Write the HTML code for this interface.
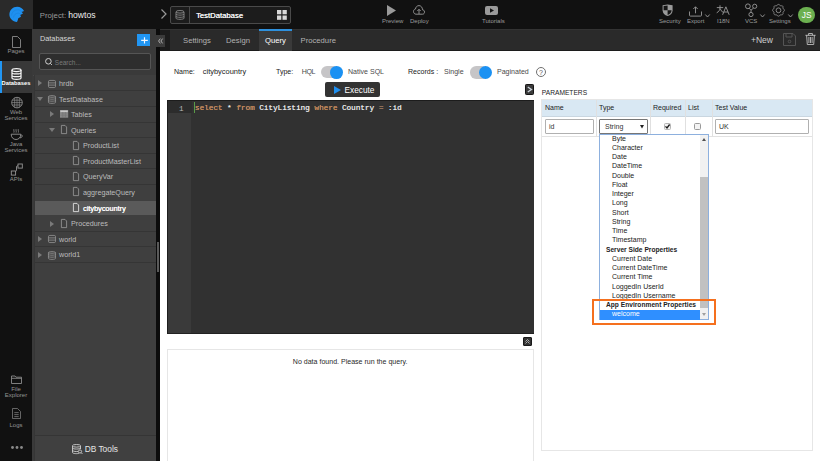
<!DOCTYPE html>
<html><head><meta charset="utf-8">
<style>
*{margin:0;padding:0;box-sizing:border-box}
html,body{width:820px;height:461px;overflow:hidden;background:#111;font-family:"Liberation Sans",sans-serif}
.a{position:absolute;white-space:nowrap}
svg{position:absolute;overflow:visible}
/* top bar */
#top{left:0;top:0;width:820px;height:29px;background:#111}
#logo{left:0;top:0;width:33px;height:29px;background:#2a2a2a}
.tl{font-size:6px;color:#9c9c9c;line-height:6px}
/* left nav */
#nav{left:0;top:29px;width:32px;height:432px;background:#111}
.nl{font-size:6px;color:#959595;line-height:6px;text-align:center;width:32px;left:0;margin-top:1px}
/* sidebar */
#side{left:32px;top:29px;width:124px;height:432px;background:#3a3a3a}
#tree{left:35px;top:75px;width:121px;height:360px;background:#3f3f3f}
.row{position:absolute;left:35px;width:121px;height:16px;border-top:1px solid #333}
.tt{font-size:7.2px;color:#bdbdbd;line-height:8px}
/* tabs */
#tabs{left:170px;top:29px;width:650px;height:22px;background:#2a2a2a}
.tab{font-size:7.7px;color:#b2b2b2;line-height:8px}
</style></head><body>
<div class="a" id="top"></div>
<div class="a" id="logo"></div>
<!-- logo -->
<svg style="left:0;top:0" width="33" height="29" viewBox="0 0 33 29"><path d="M17 22 C12.6 21.6 9.4 18.3 9.4 14.4 C9.4 10.1 12.9 6.7 17.2 6.7 C20.2 6.7 22.8 8.5 24 11.1 L21.7 12.1 L23 13.6 L20.3 15.1 L21 16.8 L18.3 18.3 L17.8 20 Z" fill="#1e90f0"/><g fill="none" stroke="#1a78cc" stroke-width="0.5" opacity="0.7"><path d="M11.5 15.5 C11.8 12 14 10 17.5 9.8 C19.5 9.8 21 10.7 22 12"/><path d="M13.5 17.5 C13.8 15 15.5 13.2 18 13.2 C19 13.2 19.8 13.5 20.5 14.5"/></g></svg>
<div class="a" style="left:39.8px;top:10.5px;font-size:7.75px;line-height:9px;color:#9a9a9a">Project: <span style="color:#ececec;font-size:8.65px">howtos</span></div>

<!-- chevron + db selector -->
<svg style="left:160px;top:9px" width="8" height="10" viewBox="0 0 8 10"><path d="M1.5 0.5 L6 5 L1.5 9.5" fill="none" stroke="#9a9a9a" stroke-width="1.2"/></svg>
<div class="a" style="left:170px;top:6px;width:121px;height:18px;background:#1c1c1c;border:1px solid #4a4a4a;border-radius:2px"></div>
<div class="a" style="left:189px;top:7px;width:1px;height:16px;background:#4a4a4a"></div>
<svg style="left:175px;top:10px" width="10" height="10" viewBox="0 0 10 10"><g fill="none" stroke="#8a8a8a" stroke-width="0.9"><ellipse cx="5" cy="1.8" rx="4" ry="1.3"/><path d="M1 1.8 V8.2 C1 9.7 9 9.7 9 8.2 V1.8 M1 4 C1 5.5 9 5.5 9 4 M1 6.2 C1 7.7 9 7.7 9 6.2"/></g></svg>
<div class="a" style="left:196px;top:11.7px;font-size:7.7px;line-height:8px;color:#f4f4f4;text-shadow:0.15px 0 0 #f4f4f4">TestDatabase</div>
<svg style="left:277px;top:10px" width="10" height="10" viewBox="0 0 10 10"><g fill="#d8d8d8"><rect x="0" y="0" width="4.3" height="4.3"/><rect x="5.5" y="0" width="4.3" height="4.3"/><rect x="0" y="5.5" width="4.3" height="4.3"/><rect x="5.5" y="5.5" width="4.3" height="4.3"/></g></svg>

<!-- preview / deploy / tutorials -->
<svg style="left:387px;top:5px" width="9" height="11" viewBox="0 0 9 11"><path d="M0 0 L9 5.5 L0 11Z" fill="#9a9a9a"/></svg>
<div class="a tl" style="left:382px;top:18px">Preview</div>
<svg style="left:413px;top:5px" width="12" height="10" viewBox="0 0 12 10"><g fill="none" stroke="#9a9a9a" stroke-width="0.9"><path d="M3 9.2 H9.5 C11 9.2 11.5 8 11.5 7 C11.5 5.5 10.3 4.8 9.5 4.8 C9.5 2.3 7.8 0.6 6 0.6 C4 0.6 2.6 2.2 2.5 4 C1.3 4.2 0.5 5.2 0.5 6.5 C0.5 8 1.6 9.2 3 9.2Z"/><path d="M6 9 V4.3 M4.3 6 L6 4.3 L7.7 6"/></g></svg>
<div class="a tl" style="left:410px;top:18px">Deploy</div>
<svg style="left:485px;top:6px" width="13" height="9" viewBox="0 0 13 9"><rect x="0" y="0" width="13" height="9" rx="2" fill="#9a9a9a"/><path d="M5 2.3 L9 4.5 L5 6.7Z" fill="#111"/></svg>
<div class="a tl" style="left:482px;top:18px">Tutorials</div>

<!-- right icons -->
<svg style="left:662px;top:4px" width="12" height="13" viewBox="0 0 12 13"><path d="M0.6 1.3 L5.6 0.5 L10.6 1.3 V6.2 C10.6 9.2 8.6 11 5.6 12 C2.6 11 0.6 9.2 0.6 6.2 Z" fill="#9a9a9a"/><path d="M1.6 2.1 L5.6 1.5 V6.2 H1.6 Z M5.6 6.2 H9.6 C9.5 8.6 8 10.1 5.6 11 Z" fill="#151515"/></svg>
<div class="a tl" style="left:659px;top:18px">Security</div>
<svg style="left:689px;top:5.5px" width="14" height="11" viewBox="0 0 14 11"><g fill="none" stroke="#9a9a9a" stroke-width="0.9"><path d="M0.5 5.5 V9.3 C0.5 9.8 0.8 10.1 1.3 10.1 H11.7 C12.2 10.1 12.5 9.8 12.5 9.3 V5.5"/><path d="M6.5 7.3 V0.8 M4.3 3 L6.5 0.8 L8.7 3"/></g></svg>
<svg style="left:705px;top:14.2px" width="5" height="4" viewBox="0 0 5 4"><path d="M0.3 0.5 L2.5 3 L4.7 0.5" fill="none" stroke="#9a9a9a" stroke-width="0.9"/></svg>
<div class="a tl" style="left:687px;top:18px">Export</div>
<svg style="left:716px;top:5px" width="14" height="11" viewBox="0 0 14 11"><g fill="none" stroke="#9a9a9a" stroke-width="0.9"><path d="M0.8 2.6 H7.2 M4 0.3 V2.6 C4 5 2.8 6.8 0.7 7.8 M4.2 3.6 C5 5.5 6 6.8 7.3 7.6"/><path d="M6.6 9.8 L9.9 1.8 L13.2 9.8 M7.8 7 H12"/></g></svg>
<div class="a tl" style="left:717px;top:18px">I18N</div>
<svg style="left:744px;top:3px" width="14" height="14" viewBox="0 0 14 14"><g fill="none" stroke="#9a9a9a" stroke-width="0.9"><circle cx="3.9" cy="3.3" r="2.4"/><circle cx="10.7" cy="3.3" r="2.1"/><circle cx="7" cy="11.5" r="2.1"/><path d="M5.2 5.3 L7 7.2 L9.5 5.1 M7 7.2 V9.4"/></g></svg>
<svg style="left:760px;top:14.2px" width="5" height="4" viewBox="0 0 5 4"><path d="M0.3 0.5 L2.5 3 L4.7 0.5" fill="none" stroke="#9a9a9a" stroke-width="0.9"/></svg>
<div class="a tl" style="left:745px;top:18px">VCS</div>
<svg style="left:772px;top:3.8px" width="13" height="13" viewBox="0 0 13 13"><g fill="none" stroke="#9a9a9a" stroke-width="0.85"><circle cx="6.5" cy="6.3" r="2.4"/><path d="M6.50 0.42 L6.73 0.42 L6.96 0.45 L7.18 0.52 L7.39 0.67 L7.56 0.95 L7.71 1.24 L7.88 1.41 L8.06 1.51 L8.24 1.59 L8.42 1.67 L8.60 1.74 L8.79 1.81 L8.98 1.87 L9.22 1.86 L9.53 1.77 L9.85 1.69 L10.10 1.73 L10.31 1.84 L10.49 1.98 L10.66 2.14 L10.82 2.31 L10.96 2.49 L11.07 2.70 L11.11 2.95 L11.03 3.27 L10.94 3.58 L10.93 3.82 L10.99 4.01 L11.06 4.20 L11.13 4.38 L11.21 4.56 L11.29 4.74 L11.39 4.92 L11.56 5.09 L11.85 5.24 L12.13 5.41 L12.28 5.62 L12.35 5.84 L12.38 6.07 L12.38 6.30 L12.38 6.53 L12.35 6.76 L12.28 6.98 L12.13 7.19 L11.85 7.36 L11.56 7.51 L11.39 7.68 L11.29 7.86 L11.21 8.04 L11.13 8.22 L11.06 8.40 L10.99 8.59 L10.93 8.78 L10.94 9.02 L11.03 9.33 L11.11 9.65 L11.07 9.90 L10.96 10.11 L10.82 10.29 L10.66 10.46 L10.49 10.62 L10.31 10.76 L10.10 10.87 L9.85 10.91 L9.53 10.83 L9.22 10.74 L8.98 10.73 L8.79 10.79 L8.60 10.86 L8.42 10.93 L8.24 11.01 L8.06 11.09 L7.88 11.19 L7.71 11.36 L7.56 11.65 L7.39 11.93 L7.18 12.08 L6.96 12.15 L6.73 12.18 L6.50 12.18 L6.27 12.18 L6.04 12.15 L5.82 12.08 L5.61 11.93 L5.44 11.65 L5.29 11.36 L5.12 11.19 L4.94 11.09 L4.76 11.01 L4.58 10.93 L4.40 10.86 L4.21 10.79 L4.02 10.73 L3.78 10.74 L3.47 10.83 L3.15 10.91 L2.90 10.87 L2.69 10.76 L2.51 10.62 L2.34 10.46 L2.18 10.29 L2.04 10.11 L1.93 9.90 L1.89 9.65 L1.97 9.33 L2.06 9.02 L2.07 8.78 L2.01 8.59 L1.94 8.40 L1.87 8.22 L1.79 8.04 L1.71 7.86 L1.61 7.68 L1.44 7.51 L1.15 7.36 L0.87 7.19 L0.72 6.98 L0.65 6.76 L0.62 6.53 L0.62 6.30 L0.62 6.07 L0.65 5.84 L0.72 5.62 L0.87 5.41 L1.15 5.24 L1.44 5.09 L1.61 4.92 L1.71 4.74 L1.79 4.56 L1.87 4.38 L1.94 4.20 L2.01 4.01 L2.07 3.82 L2.06 3.58 L1.97 3.27 L1.89 2.95 L1.93 2.70 L2.04 2.49 L2.18 2.31 L2.34 2.14 L2.51 1.98 L2.69 1.84 L2.90 1.73 L3.15 1.69 L3.47 1.77 L3.78 1.86 L4.02 1.87 L4.21 1.81 L4.40 1.74 L4.58 1.67 L4.76 1.59 L4.94 1.51 L5.12 1.41 L5.29 1.24 L5.44 0.95 L5.61 0.67 L5.82 0.52 L6.04 0.45 L6.27 0.42Z"/></g></svg>
<svg style="left:787.5px;top:14.2px" width="5" height="4" viewBox="0 0 5 4"><path d="M0.3 0.5 L2.5 3 L4.7 0.5" fill="none" stroke="#9a9a9a" stroke-width="0.9"/></svg>
<div class="a tl" style="left:769px;top:18px">Settings</div>
<div class="a" style="left:798.2px;top:6.5px;width:16.4px;height:16.4px;border-radius:50%;background:#6cb050"></div>
<div class="a" style="left:798.4px;top:10.6px;width:16.4px;text-align:center;font-size:8.3px;line-height:9px;color:#fff">JS</div>

<!-- left nav -->
<div class="a" id="nav"></div>
<div class="a" style="left:0;top:61px;width:32px;height:32px;background:#383838"></div>
<div class="a" style="left:0;top:61px;width:1.5px;height:32px;background:#2196f3"></div>
<svg style="left:12px;top:36px" width="9" height="12" viewBox="0 0 9 12"><path d="M0.5 0.5 H5.5 L8.5 3.5 V11.5 H0.5Z" fill="none" stroke="#8a8a8a" stroke-width="0.9"/></svg>
<div class="a nl" style="top:47.3px">Pages</div>
<svg style="left:11px;top:67.5px" width="11" height="12" viewBox="0 0 11 12"><g fill="none" stroke="#f4f4f4" stroke-width="1.25"><ellipse cx="5.5" cy="2" rx="4.5" ry="1.5"/><path d="M1 2 V10 C1 11.8 10 11.8 10 10 V2 M1 4.7 C1 6.3 10 6.3 10 4.7 M1 7.4 C1 9 10 9 10 7.4"/></g></svg>
<div class="a nl" style="top:78.9px;color:#fff;font-weight:bold;font-size:5.8px">Databases</div>
<svg style="left:10.8px;top:96.8px" width="12" height="12" viewBox="0 0 12 12"><defs><clipPath id="gc"><circle cx="6" cy="5.6" r="5.5"/></clipPath></defs><g fill="none" stroke="#959595"><circle cx="6" cy="5.6" r="5.3" stroke-width="0.8"/><g clip-path="url(#gc)" stroke-width="0.65"><path d="M3.7 0 V12 M6 0 V12 M8.3 0 V12 M0 3.2 H12 M0 5.6 H12 M0 8 H12"/></g></g></svg>
<div class="a nl" style="top:108px">Web</div>
<div class="a nl" style="top:114px">Services</div>
<svg style="left:10px;top:128px" width="13" height="12" viewBox="0 0 13 12"><g fill="none" stroke="#959595" stroke-width="0.9"><path d="M1.2 6.2 H10.8 C10.8 9.6 8.6 11.5 6 11.5 C3.4 11.5 1.2 9.6 1.2 6.2Z"/><path d="M10.8 6.8 C12.8 6.8 12.8 9.6 9.9 9.9"/><path d="M3.9 1.2 C3.4 2.2 4.4 3 3.9 4.6 M6.1 1.2 C5.6 2.2 6.6 3 6.1 4.6 M8.3 1.2 C7.8 2.2 8.8 3 8.3 4.6" stroke-width="0.8"/></g></svg>
<div class="a nl" style="top:140px">Java</div>
<div class="a nl" style="top:146px">Services</div>
<svg style="left:10px;top:163px" width="13" height="13" viewBox="0 0 13 13"><g fill="none" stroke="#959595" stroke-width="0.9"><rect x="8" y="1" width="4.3" height="4.1"/><rect x="1.3" y="8" width="4.3" height="4.1"/><path d="M5.6 8.6 L6.5 7.6 V3.4 L8 2.6"/></g></svg>
<div class="a nl" style="top:175px">APIs</div>
<svg style="left:11px;top:375px" width="11" height="9" viewBox="0 0 11 9"><path d="M0.5 1 H4 L5 2.2 H10.5 V8.5 H0.5Z M0.5 3.3 H10.5" fill="none" stroke="#8a8a8a" stroke-width="0.9"/></svg>
<div class="a nl" style="top:385.4px">File</div>
<div class="a nl" style="top:391.4px">Explorer</div>
<svg style="left:12px;top:408px" width="9" height="11" viewBox="0 0 9 11"><path d="M0.5 0.5 H5.5 L8.5 3.5 V10.5 H0.5Z M2.3 4.6 H6.7 M2.3 6.6 H6.7 M2.3 8.6 H6.7" fill="none" stroke="#8a8a8a" stroke-width="0.7"/></svg>
<div class="a nl" style="top:420.5px">Logs</div>
<svg style="left:11px;top:446px" width="12" height="3" viewBox="0 0 12 3"><g fill="#8a8a8a"><circle cx="1.5" cy="1.5" r="1.4"/><circle cx="6" cy="1.5" r="1.4"/><circle cx="10.5" cy="1.5" r="1.4"/></g></svg>

<!-- sidebar -->
<div class="a" id="side"></div>
<div class="a" style="left:40px;top:35px;font-size:7.3px;line-height:8px;color:#d6d6d6">Databases</div>
<div class="a" style="left:137.4px;top:33.9px;width:12.6px;height:12.1px;background:#2196f3"></div>
<svg style="left:140.5px;top:36.8px" width="7" height="7" viewBox="0 0 7 7"><path d="M3.5 0.3 V6.5 M0.2 3.3 H6.8" stroke="#f4f8ff" stroke-width="1.15"/></svg>
<div class="a" style="left:39px;top:53px;width:112px;height:17px;background:#2e2e2e;border:1px solid #555;border-radius:2px"></div>
<svg style="left:44.8px;top:57.8px" width="8" height="8" viewBox="0 0 8 8"><g fill="none" stroke="#d0d0d0" stroke-width="1"><circle cx="3.4" cy="3.3" r="2.8"/><path d="M5.4 5.4 L6.9 6.9"/></g></svg>
<div class="a" style="left:54.8px;top:58.6px;font-size:6.5px;line-height:8px;color:#7a7a7a">Search...</div>
<div class="a" style="left:33px;top:74.5px;width:123px;height:1px;background:#474747"></div>
<div class="a" id="tree"></div>
<div class="a" style="left:35px;top:436px;width:121px;height:25px;background:#404040"></div>
<div class="a" style="left:35px;top:435px;width:121px;height:1px;background:#353535"></div>
<div class="a" style="left:34px;top:75px;width:1px;height:386px;background:#363636"></div>
<div class="a" style="left:156px;top:29px;width:4px;height:432px;background:#0c0c0c"></div>
<div class="a" style="left:157px;top:242px;width:2px;height:30px;background:#5a5a5a"></div>

<!-- tree rows -->
<div class="a" style="left:35px;top:90px;width:121px;height:1px;background:#353535"></div>
<div class="a" style="left:35px;top:106px;width:121px;height:1px;background:#353535"></div>
<div class="a" style="left:35px;top:122px;width:121px;height:1px;background:#353535"></div>
<div class="a" style="left:35px;top:137px;width:121px;height:1px;background:#353535"></div>
<div class="a" style="left:35px;top:153px;width:121px;height:1px;background:#353535"></div>
<div class="a" style="left:35px;top:168px;width:121px;height:1px;background:#353535"></div>
<div class="a" style="left:35px;top:184px;width:121px;height:1px;background:#353535"></div>
<div class="a" style="left:35px;top:200.6px;width:121px;height:14.7px;background:#5a5a5a"></div>
<div class="a" style="left:35px;top:231px;width:121px;height:1px;background:#353535"></div>
<div class="a" style="left:35px;top:246px;width:121px;height:1px;background:#353535"></div>
<div class="a" style="left:35px;top:262px;width:121px;height:1px;background:#353535"></div>
<!-- arrows -->
<svg style="left:38px;top:80px" width="4" height="6" viewBox="0 0 4 6"><path d="M0 0 L4 3 L0 6Z" fill="#7a7a7a"/></svg>
<svg style="left:37px;top:97px" width="6" height="4" viewBox="0 0 6 4"><path d="M0 0 H6 L3 4Z" fill="#7a7a7a"/></svg>
<svg style="left:50px;top:111px" width="4" height="6" viewBox="0 0 4 6"><path d="M0 0 L4 3 L0 6Z" fill="#7a7a7a"/></svg>
<svg style="left:49px;top:128px" width="6" height="4" viewBox="0 0 6 4"><path d="M0 0 H6 L3 4Z" fill="#7a7a7a"/></svg>
<svg style="left:50px;top:221px" width="4" height="6" viewBox="0 0 4 6"><path d="M0 0 L4 3 L0 6Z" fill="#7a7a7a"/></svg>
<svg style="left:38px;top:236px" width="4" height="6" viewBox="0 0 4 6"><path d="M0 0 L4 3 L0 6Z" fill="#7a7a7a"/></svg>
<svg style="left:38px;top:252px" width="4" height="6" viewBox="0 0 4 6"><path d="M0 0 L4 3 L0 6Z" fill="#7a7a7a"/></svg>
<!-- db icons -->
<svg style="left:48.3px;top:79.6px" width="8" height="8" viewBox="0 0 8 8"><g fill="none" stroke="#9a9a9a" stroke-width="0.75"><rect x="0.45" y="0.45" width="7.1" height="7.1" rx="1.3"/><path d="M0.45 2.9 H7.55 M0.45 5.1 H7.55"/></g></svg>
<svg style="left:48.3px;top:94.6px" width="8" height="9" viewBox="0 0 8 9"><g fill="none" stroke="#9a9a9a" stroke-width="0.75"><path d="M0.45 1.6 C0.45 0.3 7.55 0.3 7.55 1.6 V7.4 C7.55 8.7 0.45 8.7 0.45 7.4 Z M0.45 3.5 C0.45 4.4 7.55 4.4 7.55 3.5 M0.45 5.5 C0.45 6.4 7.55 6.4 7.55 5.5 M0.45 1.6 C0.45 2.5 7.55 2.5 7.55 1.6"/></g></svg>
<svg style="left:48.3px;top:235.3px" width="8" height="8" viewBox="0 0 8 8"><g fill="none" stroke="#9a9a9a" stroke-width="0.75"><rect x="0.45" y="0.45" width="7.1" height="7.1" rx="1.3"/><path d="M0.45 2.9 H7.55 M0.45 5.1 H7.55"/></g></svg>
<svg style="left:48.3px;top:250.6px" width="8" height="9" viewBox="0 0 8 9"><g fill="none" stroke="#9a9a9a" stroke-width="0.75"><path d="M0.45 1.6 C0.45 0.3 7.55 0.3 7.55 1.6 V7.4 C7.55 8.7 0.45 8.7 0.45 7.4 Z M0.45 3.5 C0.45 4.4 7.55 4.4 7.55 3.5 M0.45 5.5 C0.45 6.4 7.55 6.4 7.55 5.5 M0.45 1.6 C0.45 2.5 7.55 2.5 7.55 1.6"/></g></svg>
<!-- table icon -->
<svg style="left:60px;top:110.3px" width="8.2" height="7.7" viewBox="0 0 8.2 7.7"><rect x="0" y="0" width="8.2" height="7.7" fill="#8c8c8c"/><rect x="0.4" y="0.6" width="7.4" height="1.2" fill="#d8d8d8"/><path d="M0.4 4 H7.8 M0.4 5.8 H7.8 M2.8 2 V7.5 M5.4 2 V7.5" stroke="#6e6e6e" stroke-width="0.5"/></svg>
<!-- doc icons -->
<svg style="left:61px;top:125px" width="6" height="9" viewBox="0 0 6 9"><path d="M0.4 0.4 H4 L5.6 2 V8.6 H0.4Z" fill="none" stroke="#9a9a9a" stroke-width="0.8"/></svg>
<svg style="left:73px;top:141px" width="6" height="9" viewBox="0 0 6 9"><path d="M0.4 0.4 H4 L5.6 2 V8.6 H0.4Z" fill="none" stroke="#9a9a9a" stroke-width="0.8"/></svg>
<svg style="left:73px;top:156px" width="6" height="9" viewBox="0 0 6 9"><path d="M0.4 0.4 H4 L5.6 2 V8.6 H0.4Z" fill="none" stroke="#9a9a9a" stroke-width="0.8"/></svg>
<svg style="left:73px;top:172px" width="6" height="9" viewBox="0 0 6 9"><path d="M0.4 0.4 H4 L5.6 2 V8.6 H0.4Z" fill="none" stroke="#9a9a9a" stroke-width="0.8"/></svg>
<svg style="left:73px;top:187px" width="6" height="9" viewBox="0 0 6 9"><path d="M0.4 0.4 H4 L5.6 2 V8.6 H0.4Z" fill="none" stroke="#9a9a9a" stroke-width="0.8"/></svg>
<svg style="left:73px;top:203px" width="6" height="9" viewBox="0 0 6 9"><path d="M0.4 0.4 H4 L5.6 2 V8.6 H0.4Z" fill="none" stroke="#f0f0f0" stroke-width="0.8"/></svg>
<svg style="left:61px;top:219px" width="6" height="9" viewBox="0 0 6 9"><path d="M0.4 0.4 H4 L5.6 2 V8.6 H0.4Z" fill="none" stroke="#9a9a9a" stroke-width="0.8"/></svg>
<!-- labels -->
<div class="a tt" style="left:59px;top:80px">hrdb</div>
<div class="a tt" style="left:59px;top:96px">TestDatabase</div>
<div class="a tt" style="left:71px;top:111px">Tables</div>
<div class="a tt" style="left:71px;top:127px">Queries</div>
<div class="a tt" style="left:83px;top:142px">ProductList</div>
<div class="a tt" style="left:83px;top:158px">ProductMasterList</div>
<div class="a tt" style="left:83px;top:173px">QueryVar</div>
<div class="a tt" style="left:83px;top:189px">aggregateQuery</div>
<div class="a tt" style="left:83px;top:205px;color:#fff;font-size:7.3px;text-shadow:0.3px 0 0 #fff">citybycountry</div>
<div class="a tt" style="left:71px;top:220px">Procedures</div>
<div class="a tt" style="left:59px;top:236px">world</div>
<div class="a tt" style="left:59px;top:251px">world1</div>
<!-- db tools -->
<svg style="left:72px;top:444px" width="11" height="11" viewBox="0 0 11 11"><g fill="none" stroke="#cfcfcf" stroke-width="0.9"><ellipse cx="4.5" cy="1.8" rx="4" ry="1.3"/><path d="M0.5 1.8 V8.5 C0.5 9.8 6 9.8 7 9.3 M0.5 4 C0.5 5.4 8.5 5.4 8.5 4 V5 M0.5 6.3 C0.5 7.6 5 7.7 6 7.4 M8.5 1.8 V4"/><circle cx="8" cy="7.5" r="1.6"/><path d="M9.2 8.7 L10.5 10"/></g></svg>
<div class="a" style="left:84.7px;top:445.4px;font-size:8.35px;line-height:9px;color:#e4e4e4">DB Tools</div>

<!-- tab bar -->
<div class="a" style="left:160px;top:29px;width:660px;height:22px;background:#1b1b1b"></div>
<div class="a" id="tabs"></div>
<div class="a" style="left:160px;top:29px;width:660px;height:1px;background:#333"></div>
<div class="a" style="left:160px;top:50px;width:660px;height:1px;background:#1c1c1c"></div>
<div class="a" style="left:156px;top:35.3px;width:9px;height:11.5px;background:#3a3a3a"></div>
<svg style="left:158px;top:38px" width="5" height="6" viewBox="0 0 5 6"><path d="M2.3 0.6 L0.6 3 L2.3 5.4 M4.6 0.6 L2.9 3 L4.6 5.4" fill="none" stroke="#c8c8c8" stroke-width="0.8"/></svg>
<div class="a" style="left:258.8px;top:29px;width:33.3px;height:21.5px;background:#3a3a3a"></div>
<div class="a" style="left:258.8px;top:29px;width:33.3px;height:1.7px;background:#2e90dc"></div>
<div class="a tab" style="left:183px;top:36.6px">Settings</div>
<div class="a tab" style="left:226px;top:36.6px">Design</div>
<div class="a tab" style="left:265px;top:36.6px;color:#fff">Query</div>
<div class="a tab" style="left:300.5px;top:36.6px">Procedure</div>
<div class="a tab" style="left:751px;top:35.5px;font-size:8.5px;color:#cfcfcf">+New</div>
<svg style="left:783px;top:33px" width="13" height="13" viewBox="0 0 13 13"><g fill="none" stroke="#555" stroke-width="1"><path d="M0.5 0.5 H10 L12.5 3 V12.5 H0.5Z"/><path d="M3 0.5 V4 H9 V0.5"/><circle cx="6.5" cy="8.5" r="1.3"/></g></svg>
<svg style="left:805px;top:33px" width="11" height="12" viewBox="0 0 11 12"><g fill="none" stroke="#d0d0d0" stroke-width="0.8"><path d="M0.4 2.3 H10.6 M3.6 2.3 V0.5 H7.4 V2.3 M1.6 2.3 L2.3 11.5 H8.7 L9.4 2.3 M3.9 4 V10 M5.5 4 V10 M7.1 4 V10"/></g></svg>

<!-- main content -->
<div class="a" style="left:160px;top:51px;width:660px;height:410px;background:#fff"></div>

<!-- query header -->
<div class="a" style="left:174px;top:68px;font-size:7.05px;line-height:8px;color:#222">Name:</div>
<div class="a" style="left:202.8px;top:67.8px;font-size:7.44px;line-height:8px;color:#222">citybycountry</div>
<div class="a" style="left:276px;top:68px;font-size:7.05px;line-height:8px;color:#222">Type:</div>
<div class="a" style="left:301.7px;top:68px;font-size:7.05px;line-height:8px;color:#4a4a4a;letter-spacing:-0.35px">HQL</div>
<div class="a" style="left:321px;top:66.3px;width:18px;height:12.2px;border-radius:6.1px;background:#c6c5c7"></div>
<div class="a" style="left:329.9px;top:66px;width:12.8px;height:12.8px;border-radius:50%;background:#1b91f2"></div>
<div class="a" style="left:348px;top:68px;font-size:7.05px;line-height:8px;color:#4a4a4a">Native SQL</div>
<div class="a" style="left:408px;top:68px;font-size:7.05px;line-height:8px;color:#222">Records :</div>
<div class="a" style="left:444px;top:68px;font-size:7.05px;line-height:8px;color:#4a4a4a">Single</div>
<div class="a" style="left:469.5px;top:66.2px;width:18px;height:12.5px;border-radius:6.25px;background:#c6c5c7"></div>
<div class="a" style="left:478.9px;top:65.9px;width:13px;height:13px;border-radius:50%;background:#1b91f2"></div>
<div class="a" style="left:497px;top:68px;font-size:7.05px;line-height:8px;color:#4a4a4a">Paginated</div>
<div class="a" style="left:536px;top:67.2px;width:10px;height:10px;border-radius:50%;border:0.9px solid #707070"></div>
<div class="a" style="left:536px;top:68.5px;width:10px;text-align:center;font-size:7px;line-height:7px;color:#555">?</div>
<!-- execute -->
<div class="a" style="left:325px;top:82px;width:55px;height:15px;border-radius:2px;background:#333"></div>
<svg style="left:333.5px;top:85.5px" width="7" height="8" viewBox="0 0 7 8"><path d="M0 0 L7 4 L0 8Z" fill="#1e8ff0"/></svg>
<div class="a" style="left:344.5px;top:86px;font-size:8.3px;line-height:9px;color:#fff">Execute</div>
<svg style="left:525px;top:84px" width="9" height="11" viewBox="0 0 9 11"><rect x="0.5" y="0.5" width="8" height="10" rx="0.8" fill="#3a3a3a" stroke="#151515" stroke-width="1"/><path d="M2.8 3 L6.4 5.5 L2.8 8" fill="none" stroke="#c8d0d8" stroke-width="1.4"/></svg>
<!-- editor -->
<div class="a" style="left:167px;top:100px;width:367px;height:234px;background:#313131;border-top:1px solid #1c1c1c;border-bottom:1px solid #222"></div>
<div class="a" style="left:167px;top:101px;width:24.4px;height:232px;background:#3a3a3a"></div>
<div class="a" style="left:167px;top:100px;width:1px;height:234px;background:#1e1e1e"></div>
<div class="a" style="left:167.5px;top:101px;width:24px;height:12px;background:#2c2c2c"></div>
<div class="a" style="left:179px;top:104.7px;font-family:'Liberation Mono',monospace;font-size:7.6px;line-height:8px;color:#b8b8b8">1</div>
<div class="a" style="left:194.2px;top:101.5px;width:0.8px;height:11.3px;background:#5a9a48"></div>
<div class="a" style="left:194.8px;top:104.4px;font-family:'Liberation Mono',monospace;font-size:7.67px;line-height:8px;color:#f4f4f4;text-shadow:0.3px 0 0 rgba(255,255,255,0.6)"><span style="color:#cc7832;font-weight:normal">select</span> * <span style="color:#cc7832;font-weight:normal">from</span> CityListing <span style="color:#cc7832;font-weight:normal">where</span> Country <span style="color:#a06a3c">=</span> :id</div>
<!-- results -->
<div class="a" style="left:523.2px;top:337.2px;width:9.1px;height:8.7px;background:#333;border:0.8px solid #181818;border-radius:1px"></div>
<svg style="left:524.3px;top:338px" width="7" height="7" viewBox="0 0 7 7"><path d="M1.5 3.5 L3.5 1.5 L5.5 3.5 M1.5 5.5 L3.5 3.5 L5.5 5.5" fill="none" stroke="#ccc" stroke-width="0.8"/></svg>
<div class="a" style="left:167px;top:349px;width:366.6px;height:120px;border:1px solid #e6e6e6"></div>
<div class="a" style="left:292.8px;top:357.9px;font-size:7.06px;line-height:8px;color:#2a2a2a">No data found. Please run the query.</div>
<!-- parameters -->
<div class="a" style="left:541.8px;top:89px;font-size:6.65px;line-height:8px;color:#222">PARAMETERS</div>
<div class="a" style="left:541px;top:99px;width:272px;height:352px;border:1px solid #e6e6e6"></div>
<div class="a" style="left:542px;top:100px;width:270px;height:17px;background:#d9e8f3"></div>
<div class="a" style="left:542px;top:116px;width:270px;height:1px;background:#c9d6e0"></div>
<div class="a" style="left:542px;top:136px;width:270px;height:1px;background:#e2e2e2"></div>
<div class="a" style="left:596px;top:100px;width:1px;height:37px;background:#e0e0e0"></div>
<div class="a" style="left:650px;top:100px;width:1px;height:37px;background:#e0e0e0"></div>
<div class="a" style="left:685px;top:100px;width:1px;height:37px;background:#e0e0e0"></div>
<div class="a" style="left:712px;top:100px;width:1px;height:37px;background:#e0e0e0"></div>
<div class="a" style="left:545px;top:104.3px;font-size:7px;line-height:8px;color:#222">Name</div>
<div class="a" style="left:599px;top:104.3px;font-size:7px;line-height:8px;color:#222">Type</div>
<div class="a" style="left:653px;top:104.3px;font-size:7px;line-height:8px;color:#222">Required</div>
<div class="a" style="left:688px;top:104.3px;font-size:7px;line-height:8px;color:#222">List</div>
<div class="a" style="left:715px;top:104.3px;font-size:7px;line-height:8px;color:#222">Test Value</div>
<div class="a" style="left:545px;top:119px;width:49px;height:15px;border:1px solid #b0b0b0;border-radius:1px"></div>
<div class="a" style="left:549px;top:123px;font-size:7px;line-height:8px;color:#333">id</div>
<div class="a" style="left:599px;top:119px;width:49px;height:15px;border:1px solid #767676;border-radius:1px"></div>
<div class="a" style="left:605px;top:123px;font-size:7px;line-height:8px;color:#333">String</div>
<svg style="left:640px;top:125px" width="4" height="4" viewBox="0 0 4 4"><path d="M0 0 H4 L2 3.5Z" fill="#222"/></svg>
<div class="a" style="left:664px;top:123px;width:7px;height:7px;border:1px solid #b5b5b5;border-radius:1.5px;background:#f3f3f3"></div>
<svg style="left:665px;top:124px" width="5" height="5" viewBox="0 0 5 5"><path d="M0.5 2.4 L2 4 L4.6 0.5" fill="none" stroke="#1a1a1a" stroke-width="1.3"/></svg>
<div class="a" style="left:694px;top:123px;width:7px;height:7px;border:1px solid #999;border-radius:1.5px;background:#f3f3f3"></div>
<div class="a" style="left:715px;top:119px;width:94px;height:15px;border:1px solid #b0b0b0;border-radius:1px"></div>
<div class="a" style="left:719px;top:123px;font-size:7px;line-height:8px;color:#333">UK</div>
<!-- dropdown -->
<div class="a" style="left:599px;top:134px;width:110px;height:186px;background:#fff;border:1px solid #8db0de"></div>
<div class="a" style="left:700px;top:135px;width:8px;height:184px;background:#f1f1f1"></div>
<div class="a" style="left:700px;top:177px;width:8px;height:131px;background:#c1c1c1"></div>
<svg style="left:702px;top:138px" width="4" height="3" viewBox="0 0 4 3"><path d="M0 3 H4 L2 0Z" fill="#505050"/></svg>
<svg style="left:702px;top:313px" width="4" height="3" viewBox="0 0 4 3"><path d="M0 0 H4 L2 3Z" fill="#a0a0a0"/></svg>
<div class="a" style="left:600px;top:310px;width:100px;height:9.6px;background:#2f8fff"></div>
<div id="dd" class="a" style="left:606px;top:133.6px;font-size:7px;line-height:9.25px;color:#222">
<div style="padding-left:6px">Byte</div>
<div style="padding-left:6px">Character</div>
<div style="padding-left:6px">Date</div>
<div style="padding-left:6px">DateTime</div>
<div style="padding-left:6px">Double</div>
<div style="padding-left:6px">Float</div>
<div style="padding-left:6px">Integer</div>
<div style="padding-left:6px">Long</div>
<div style="padding-left:6px">Short</div>
<div style="padding-left:6px">String</div>
<div style="padding-left:6px">Time</div>
<div style="padding-left:6px">Timestamp</div>
<div style="font-weight:bold;font-size:6.65px">Server Side Properties</div>
<div style="padding-left:6px">Current Date</div>
<div style="padding-left:6px">Current DateTime</div>
<div style="padding-left:6px">Current Time</div>
<div style="padding-left:6px">LoggedIn UserId</div>
<div style="padding-left:6px">LoggedIn Username</div>
<div style="font-weight:bold;font-size:6.65px">App Environment Properties</div>
<div style="padding-left:6px;color:#fff">welcome</div>
</div>
<div class="a" style="left:592px;top:299px;width:123.5px;height:25.6px;border:2.2px solid #f5701e"></div>
</body></html>
